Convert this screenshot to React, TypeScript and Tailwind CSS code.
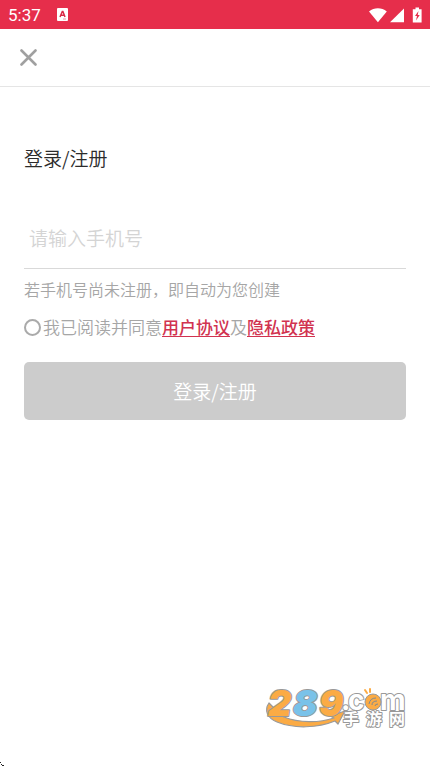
import React from "react";

function StatusBar() {
  return (
    <div className="flex h-[29px] items-center justify-between bg-[#e62e4b] px-2 text-white">
      <div className="flex items-center gap-4">
        <span className="font-[Roboto,sans-serif] text-[17px] leading-5 font-normal">5:37</span>
        <svg width="11" height="13" viewBox="0 0 11 13" aria-hidden="true">
          <rect width="11" height="13" rx="1" fill="#fff" />
          <path d="M3 9 5.3 3.5h.6L8 9M3.8 7.2h3.4" fill="none" stroke="#d92b47" strokeWidth="1.5" />
          <path d="M6 11h3" stroke="#e995a3" strokeWidth="1" />
        </svg>
      </div>
      <svg width="53" height="18" viewBox="0 0 53 18" fill="#fff" aria-hidden="true">
        <path d="M0 5.4C5.2 1.2 12.600 1.2 17.800 5.400L8.900 16.300Z" />
        <path d="M35 2.500V16.300H21Z" />
        <path d="M46.500 1.500h3.500V3.200h2.600V16.500h-8.800V3.200h2.700Z" />
        <path d="M49.500 5 46 10h2L47 14.500l3.700-5.500h-2Z" fill="#e62e4b" />
      </svg>
    </div>
  );
}

function Logo() {
  return (
    <svg width="144" height="60" viewBox="0 -8 144 60" role="img" aria-label="289.com 手游网">
      <path
        d="M5 16C0 23 3 31 13 35C30 42 54 41 71 34L74 37L81 24L66 29L70 31C55 36 35 36 20 30C13 27 10 25 10 21Z"
        fill="#fbab45"
        stroke="#999"
        strokeWidth="1.2"
        strokeLinejoin="round"
      />
      <g
        className="font-[Inter,sans-serif] font-black italic"
        fontSize="36"
        stroke="#999"
        strokeWidth="2"
        strokeLinejoin="round"
        paintOrder="stroke"
      >
        <text x="4" y="29" fill="#fbab45">2</text>
        <text x="29" y="29" fill="#79c2e9">8</text>
        <text x="55" y="29" fill="#fbab45">9</text>
      </g>
      <g
        className="font-[Inter,sans-serif] font-bold"
        fontSize="28"
        fill="#fff"
        stroke="#999"
        strokeWidth="2"
        strokeLinejoin="round"
        paintOrder="stroke"
      >
        <text x="77" y="23">.</text>
        <text x="84" y="23">c</text>
        <text x="116" y="23">m</text>
      </g>
      <circle cx="109" cy="15" r="8" fill="#fbab45" stroke="#999" />
      <path d="M103 6 101 3M106 5V2" stroke="#fbab45" strokeWidth="2" strokeLinecap="round" />
      <path d="M105 17q1-6 7-6M108 18q0-4 5-4M111 19q0-2 3-2" fill="none" stroke="#7f8a91" strokeWidth="1" />
      <g
        className="font-['Noto_Sans_CJK_SC',sans-serif] font-bold"
        fontSize="16"
        fill="#fff"
        stroke="#999"
        strokeWidth="2"
        strokeLinejoin="round"
        paintOrder="stroke"
      >
        <text x="79" y="38">手</text>
        <text x="102" y="38">游</text>
        <text x="125" y="38">网</text>
      </g>
    </svg>
  );
}

export default function App() {
  return (
    <div className="relative flex min-h-screen flex-col bg-white font-['Noto_Sans_CJK_SC',sans-serif] font-[350]">
      <StatusBar />
      <header className="flex h-[58px] items-center border-b border-[#e5e5e5] px-5">
        <button type="button" aria-label="关闭">
          <svg width="17" height="17" viewBox="0 0 17 17" fill="none" aria-hidden="true">
            <path d="M1.500 1.500 15.500 15.500M15.500 1.500 1.500 15.500" stroke="#a0a0a0" strokeWidth="2.600" strokeLinecap="round" />
          </svg>
        </button>
      </header>
      <main className="flex flex-col px-6 pt-[57px]">
        <h1 className="text-[19px] leading-7 font-[350] text-[#2b2b2b]">登录/注册</h1>
        <input
          type="tel"
          aria-label="手机号"
          placeholder="请输入手机号"
          className="mt-[35px] h-[62px] w-full border-b border-[#d9d9d9] px-[5px] text-[19px] leading-7 text-[#333] outline-none placeholder:text-[#d4d4d4]"
        />
        <p className="mt-2 text-[16px] leading-6 text-[#a6a6a6]">若手机号尚未注册，即自动为您创建</p>
        <div className="mt-[14px] flex items-center gap-[2px] text-[17px] leading-6 text-[#a6a6a6]">
          <input
            id="agree"
            type="checkbox"
            className="size-[17px] shrink-0 appearance-none rounded-full border-2 border-[#aaa] checked:bg-[#e62e4b]"
          />
          <div>
            <label htmlFor="agree">我已阅读并同意</label>
            <a href="#terms" className="font-medium text-[#d13350] underline decoration-1 underline-offset-2">用户协议</a>
            及
            <a href="#privacy" className="font-medium text-[#d13350] underline decoration-1 underline-offset-2">隐私政策</a>
          </div>
        </div>
        <button type="button" className="mt-[23px] h-[58px] w-full rounded-[5px] bg-[#ccc] text-[19px] leading-7 text-white">
          登录/注册
        </button>
      </main>
      <footer className="mt-auto flex justify-end pr-[22px] pb-[27px]">
        <Logo />
      </footer>
      <svg className="absolute bottom-0 left-0" width="4" height="4" viewBox="0 0 4 4" aria-hidden="true">
        <path d="M0 0h1v1H0zM1 2h1v1H1zM2 3h2v1H2z" fill="#222" />
      </svg>
    </div>
  );
}
